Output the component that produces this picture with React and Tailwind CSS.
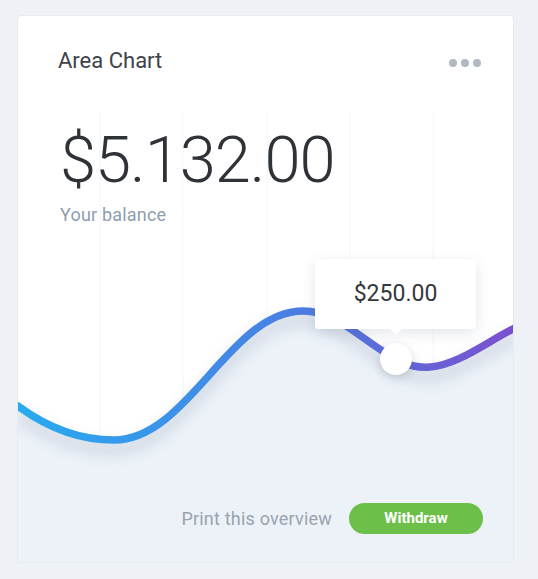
import React from 'react';

const curve =
  'M0,390 C30,412 62,424 96,424 C170,424 212,295 285,295 C320,295 345,326 378,343 C392,350 400,352 412,351 C440,349 470,325 497,312';

function Chart() {
  const gridX = [82, 165, 249, 332, 415];
  return (
    <svg className="absolute inset-0" width="497" height="548" viewBox="0 0 497 548">
      <defs>
        <linearGradient id="line" x1="0" y1="0" x2="497" y2="0" gradientUnits="userSpaceOnUse">
          <stop offset="0" stopColor="#29aaf0" />
          <stop offset="0.55" stopColor="#4a7fe2" />
          <stop offset="1" stopColor="#7b4fcf" />
        </linearGradient>
        <filter id="soft" x="-10%" y="-20%" width="120%" height="160%">
          <feGaussianBlur stdDeviation="7" />
        </filter>
      </defs>
      {gridX.map((x) => (
        <line key={x} x1={x} y1="95" x2={x} y2="548" stroke="#f4f6f9" strokeWidth="1" />
      ))}
      <path d={`${curve} L497,548 L0,548 Z`} fill="#ebf1f8" fillOpacity="0.94" />
      <path
        d={curve}
        transform="translate(0,9)"
        fill="none"
        stroke="#7d8aa0"
        strokeOpacity="0.28"
        strokeWidth="10"
        filter="url(#soft)"
      />
      <path d={curve} fill="none" stroke="url(#line)" strokeWidth="7.5" strokeLinecap="round" />
    </svg>
  );
}

export default function App() {
  return (
    <div className="w-[538px] h-[579px] bg-[#eef1f5] pt-[15px] pl-[17px]" style={{ fontFamily: 'Roboto, "Liberation Sans", sans-serif' }}>
      <div className="relative w-[497px] h-[548px] bg-white border border-[#e6eaf0] rounded-[4px] overflow-hidden flex flex-col">
        <Chart />

        {/* Header */}
        <div className="relative flex items-center justify-between pt-[31px] pl-[40px] pr-[32px]">
          <h3 className="text-[22px] leading-[28px] text-[#3e4249]">Area Chart</h3>
          <div className="flex items-center gap-[4px] mt-[3px]">
            <span className="w-[8px] h-[8px] rounded-full bg-[#b3b8c2]" />
            <span className="w-[8px] h-[8px] rounded-full bg-[#b3b8c2]" />
            <span className="w-[8px] h-[8px] rounded-full bg-[#b3b8c2]" />
          </div>
        </div>

        {/* Balance */}
        <div className="relative pl-[42px] mt-[53px]">
          <div className="text-[65px] leading-none font-light text-[#2f3338] tracking-[-1px]">$5.132.00</div>
          <div className="mt-[11px] text-[18px] leading-[21px] tracking-[0.2px] text-[#8e9db0]">Your balance</div>
        </div>

        <div className="flex-1" />

        {/* Tooltip */}
        <div className="absolute left-[297px] top-[243px] w-[161px] h-[70px] bg-white rounded-[3px] shadow-[0_4px_14px_rgba(60,80,110,0.14)] flex items-center justify-center">
          <span className="text-[23px] text-[#35383d]">$250.00</span>
          <span className="absolute left-1/2 -bottom-[6px] -ml-[6px] w-0 h-0 border-l-[6px] border-r-[6px] border-t-[6px] border-l-transparent border-r-transparent border-t-white" />
        </div>
        <div className="absolute left-[362px] top-[327px] w-[32px] h-[32px] rounded-full bg-white shadow-[0_3px_10px_rgba(60,80,110,0.22)]" />

        {/* Footer */}
        <div className="relative flex items-center justify-end gap-[17px] pr-[30px] pb-[28px]">
          <span className="text-[18px] tracking-[0.2px] text-[#9aa3ae]">Print this overview</span>
          <button className="w-[134px] h-[31px] rounded-full bg-[#6cc04a] text-white text-[15px] font-bold">
            Withdraw
          </button>
        </div>
      </div>
    </div>
  );
}
